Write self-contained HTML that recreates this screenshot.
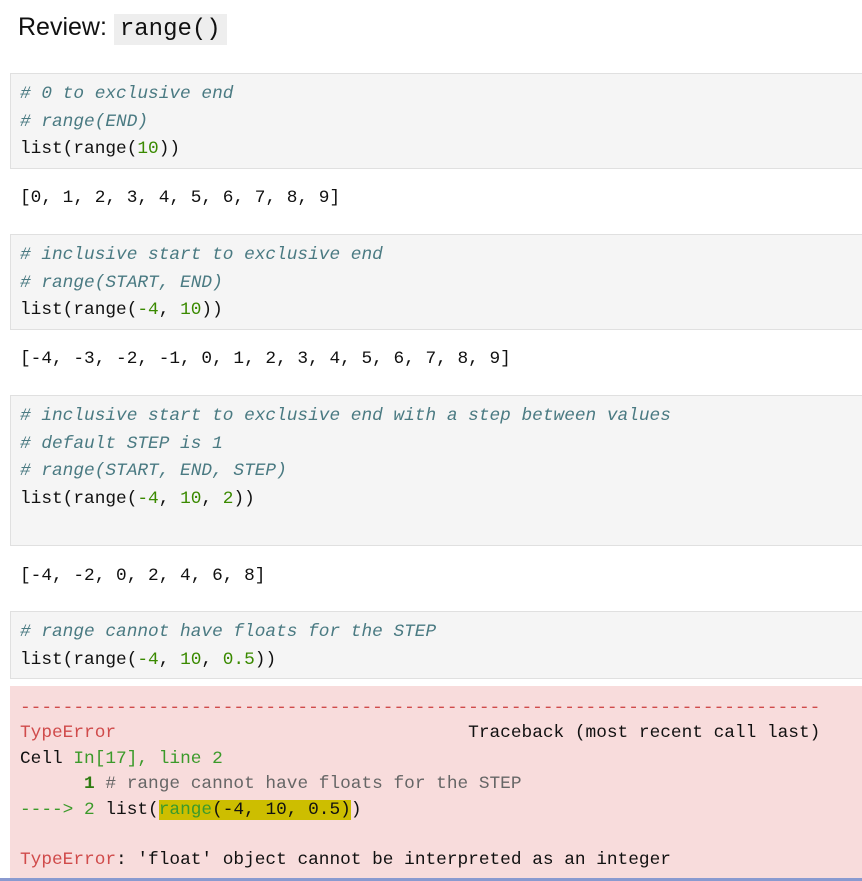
<!DOCTYPE html>
<html><head><style>
body{margin:0;width:862px;height:881px;background:#fff;overflow:hidden;position:relative;font-family:"Liberation Mono",monospace;}
.t{position:absolute;left:18px;top:13px;font-family:"Liberation Sans",sans-serif;font-size:25px;color:#111;}
.t code{background:#eeeeee;padding:2px 6px;font-family:"Liberation Mono",monospace;font-size:24px;}
.cell{position:absolute;left:10px;right:0;background:#f5f5f5;border:1px solid #e0e0e0;border-right:none;box-sizing:border-box;padding:7px 9px;}
pre{margin:0;font-family:"Liberation Mono",monospace;font-size:17.8px;line-height:27.5px;color:#111;white-space:pre;}
.c{color:#4a7a82;font-style:italic}
.n{color:#3a8a00}
.o{position:absolute;left:20px}
.err{position:absolute;left:10px;right:0;top:686px;height:192px;background:#f8dcdc;padding:10px 10px;box-sizing:border-box}
.err pre{line-height:25.4px}
.r{color:#d04b4b}.g{color:#3b9a2a}.gd{color:#2d7a10;font-weight:bold}.gr{color:#666}
.hl{background:#cdbe00}
</style></head><body>
<div class="t">Review: <code>range()</code></div>
<div class="cell" style="top:73px;height:96px"><pre><span class="c"># 0 to exclusive end</span>
<span class="c"># range(END)</span>
list(range(<span class="n">10</span>))</pre></div>
<pre class="o" style="top:185px">[0, 1, 2, 3, 4, 5, 6, 7, 8, 9]</pre>
<div class="cell" style="top:234px;height:96px"><pre><span class="c"># inclusive start to exclusive end</span>
<span class="c"># range(START, END)</span>
list(range(<span class="n">-4</span>, <span class="n">10</span>))</pre></div>
<pre class="o" style="top:346px">[-4, -3, -2, -1, 0, 1, 2, 3, 4, 5, 6, 7, 8, 9]</pre>
<div class="cell" style="top:395px;height:151px"><pre><span class="c"># inclusive start to exclusive end with a step between values</span>
<span class="c"># default STEP is 1</span>
<span class="c"># range(START, END, STEP)</span>
list(range(<span class="n">-4</span>, <span class="n">10</span>, <span class="n">2</span>))</pre></div>
<pre class="o" style="top:563px">[-4, -2, 0, 2, 4, 6, 8]</pre>
<div class="cell" style="top:611px;height:68px"><pre><span class="c"># range cannot have floats for the STEP</span>
list(range(<span class="n">-4</span>, <span class="n">10</span>, <span class="n">0.5</span>))</pre></div>
<div class="err"><pre><span class="r">---------------------------------------------------------------------------</span>
<span class="r">TypeError</span>                                 Traceback (most recent call last)
Cell <span class="g">In[17], line 2</span>
<span class="gd">      1</span> <span class="gr"># range cannot have floats for the STEP</span>
<span class="g">----&gt; 2</span> list(<span class="hl"><span class="g">range</span>(-4, 10, 0.5)</span>)

<span class="r">TypeError</span>: 'float' object cannot be interpreted as an integer</pre></div>
<div style="position:absolute;left:0;right:0;top:878px;height:3px;background:#8a9ad0"></div>
</body></html>
